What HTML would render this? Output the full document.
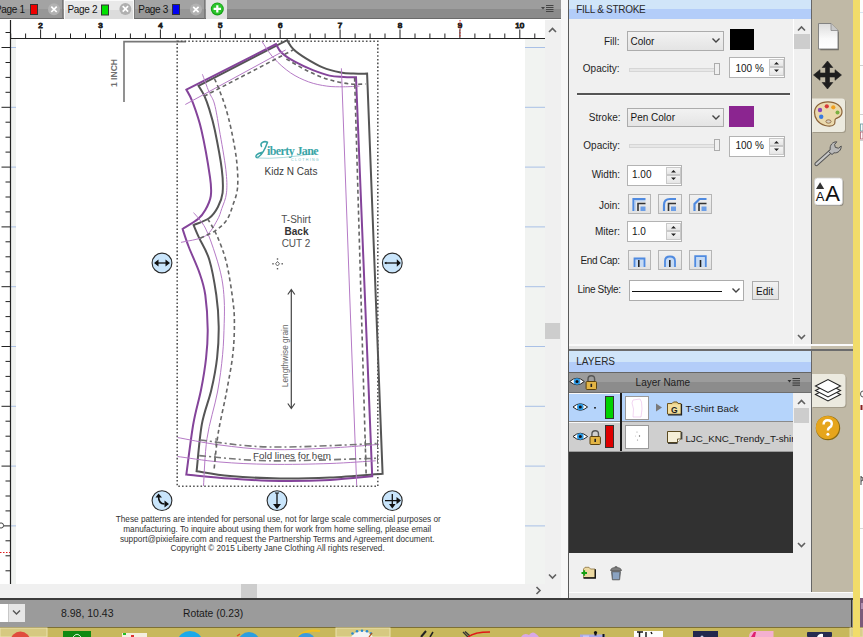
<!DOCTYPE html>
<html><head><meta charset="utf-8">
<style>
*{box-sizing:border-box}
html,body{margin:0;padding:0}
body{width:863px;height:637px;overflow:hidden;position:relative;background:#fff;font-family:"Liberation Sans",sans-serif;color:#222}
.a{position:absolute}
svg text{font-family:"Liberation Sans",sans-serif}
.rn{font-size:8px;fill:#3a3a3a;text-anchor:middle}
.lb{font-size:10px;fill:#1e1e1e;text-anchor:end}
.tx{font-size:10px;fill:#151515}
</style></head><body>

<!-- canvas svg -->
<svg class="a" style="left:0;top:0" width="863" height="637" viewBox="0 0 863 637">
 <rect x="0" y="19" width="545" height="565" fill="#fff"/>
 <rect x="11" y="39" width="5" height="545" fill="#f1f3f1"/>
 <rect x="525" y="39" width="20" height="545" fill="#f1f3f1"/>
 <g stroke="#a9c0e6" stroke-width="1"><line x1="11" y1="47.5" x2="16" y2="47.5" /><line x1="525" y1="47.5" x2="545" y2="47.5" />
<line x1="11" y1="107.3" x2="16" y2="107.3" /><line x1="525" y1="107.3" x2="545" y2="107.3" />
<line x1="11" y1="167.1" x2="16" y2="167.1" /><line x1="525" y1="167.1" x2="545" y2="167.1" />
<line x1="11" y1="226.9" x2="16" y2="226.9" /><line x1="525" y1="226.9" x2="545" y2="226.9" />
<line x1="11" y1="286.7" x2="16" y2="286.7" /><line x1="525" y1="286.7" x2="545" y2="286.7" />
<line x1="11" y1="346.5" x2="16" y2="346.5" /><line x1="525" y1="346.5" x2="545" y2="346.5" />
<line x1="11" y1="406.3" x2="16" y2="406.3" /><line x1="525" y1="406.3" x2="545" y2="406.3" />
<line x1="11" y1="466.1" x2="16" y2="466.1" /><line x1="525" y1="466.1" x2="545" y2="466.1" />
<line x1="11" y1="525.9" x2="16" y2="525.9" /><line x1="525" y1="525.9" x2="545" y2="525.9" /></g>
 <g stroke="#222" stroke-width="1"><line x1="10.7" y1="33.5" x2="10.7" y2="38" />
<line x1="25.6" y1="33.5" x2="25.6" y2="38" />
<line x1="40.6" y1="29.5" x2="40.6" y2="38" />
<text x="40.6" y="28" class="rn">2</text>
<line x1="55.6" y1="33.5" x2="55.6" y2="38" />
<line x1="70.5" y1="33.5" x2="70.5" y2="38" />
<line x1="85.5" y1="33.5" x2="85.5" y2="38" />
<line x1="100.5" y1="29.5" x2="100.5" y2="38" />
<text x="100.5" y="28" class="rn">3</text>
<line x1="115.5" y1="33.5" x2="115.5" y2="38" />
<line x1="130.4" y1="33.5" x2="130.4" y2="38" />
<line x1="145.4" y1="33.5" x2="145.4" y2="38" />
<line x1="160.4" y1="29.5" x2="160.4" y2="38" />
<text x="160.4" y="28" class="rn">4</text>
<line x1="175.4" y1="33.5" x2="175.4" y2="38" />
<line x1="190.3" y1="33.5" x2="190.3" y2="38" />
<line x1="205.3" y1="33.5" x2="205.3" y2="38" />
<line x1="220.3" y1="29.5" x2="220.3" y2="38" />
<text x="220.3" y="28" class="rn">5</text>
<line x1="235.3" y1="33.5" x2="235.3" y2="38" />
<line x1="250.2" y1="33.5" x2="250.2" y2="38" />
<line x1="265.2" y1="33.5" x2="265.2" y2="38" />
<line x1="280.2" y1="29.5" x2="280.2" y2="38" />
<text x="280.2" y="28" class="rn">6</text>
<line x1="295.2" y1="33.5" x2="295.2" y2="38" />
<line x1="310.2" y1="33.5" x2="310.2" y2="38" />
<line x1="325.1" y1="33.5" x2="325.1" y2="38" />
<line x1="340.1" y1="29.5" x2="340.1" y2="38" />
<text x="340.1" y="28" class="rn">7</text>
<line x1="355.1" y1="33.5" x2="355.1" y2="38" />
<line x1="370.1" y1="33.5" x2="370.1" y2="38" />
<line x1="385.0" y1="33.5" x2="385.0" y2="38" />
<line x1="400.0" y1="29.5" x2="400.0" y2="38" />
<text x="400.0" y="28" class="rn">8</text>
<line x1="415.0" y1="33.5" x2="415.0" y2="38" />
<line x1="429.9" y1="33.5" x2="429.9" y2="38" />
<line x1="444.9" y1="33.5" x2="444.9" y2="38" />
<line x1="459.9" y1="29.5" x2="459.9" y2="38" />
<text x="459.9" y="28" class="rn">9</text>
<line x1="474.9" y1="33.5" x2="474.9" y2="38" />
<line x1="489.9" y1="33.5" x2="489.9" y2="38" />
<line x1="504.8" y1="33.5" x2="504.8" y2="38" />
<line x1="519.8" y1="29.5" x2="519.8" y2="38" />
<text x="519.8" y="28" class="rn">10</text>
<line x1="534.8" y1="33.5" x2="534.8" y2="38" />
<line x1="5.5" y1="32.5" x2="10" y2="32.5" />
<line x1="1.5" y1="47.5" x2="10" y2="47.5" />
<line x1="5.5" y1="62.5" x2="10" y2="62.5" />
<line x1="5.5" y1="77.4" x2="10" y2="77.4" />
<line x1="5.5" y1="92.3" x2="10" y2="92.3" />
<line x1="1.5" y1="107.3" x2="10" y2="107.3" />
<line x1="5.5" y1="122.2" x2="10" y2="122.2" />
<line x1="5.5" y1="137.2" x2="10" y2="137.2" />
<line x1="5.5" y1="152.1" x2="10" y2="152.1" />
<line x1="1.5" y1="167.1" x2="10" y2="167.1" />
<line x1="5.5" y1="182.0" x2="10" y2="182.0" />
<line x1="5.5" y1="197.0" x2="10" y2="197.0" />
<line x1="5.5" y1="211.9" x2="10" y2="211.9" />
<line x1="1.5" y1="226.9" x2="10" y2="226.9" />
<line x1="5.5" y1="241.8" x2="10" y2="241.8" />
<line x1="5.5" y1="256.8" x2="10" y2="256.8" />
<line x1="5.5" y1="271.8" x2="10" y2="271.8" />
<line x1="1.5" y1="286.7" x2="10" y2="286.7" />
<line x1="5.5" y1="301.6" x2="10" y2="301.6" />
<line x1="5.5" y1="316.6" x2="10" y2="316.6" />
<line x1="5.5" y1="331.6" x2="10" y2="331.6" />
<line x1="1.5" y1="346.5" x2="10" y2="346.5" />
<line x1="5.5" y1="361.4" x2="10" y2="361.4" />
<line x1="5.5" y1="376.4" x2="10" y2="376.4" />
<line x1="5.5" y1="391.3" x2="10" y2="391.3" />
<line x1="1.5" y1="406.3" x2="10" y2="406.3" />
<line x1="5.5" y1="421.2" x2="10" y2="421.2" />
<line x1="5.5" y1="436.2" x2="10" y2="436.2" />
<line x1="5.5" y1="451.1" x2="10" y2="451.1" />
<line x1="1.5" y1="466.1" x2="10" y2="466.1" />
<line x1="5.5" y1="481.0" x2="10" y2="481.0" />
<line x1="5.5" y1="496.0" x2="10" y2="496.0" />
<line x1="5.5" y1="510.9" x2="10" y2="510.9" />
<line x1="1.5" y1="525.9" x2="10" y2="525.9" />
<line x1="5.5" y1="540.8" x2="10" y2="540.8" />
<line x1="5.5" y1="555.8" x2="10" y2="555.8" />
<line x1="5.5" y1="570.8" x2="10" y2="570.8" /></g>
 <line x1="10" y1="38.5" x2="545" y2="38.5" stroke="#222" stroke-width="1.2"/>
 <line x1="10.5" y1="20" x2="10.5" y2="584" stroke="#222" stroke-width="1.2"/>
 <line x1="460" y1="20" x2="460" y2="38" stroke="#e02020" stroke-width="1" stroke-dasharray="1.5 1.5"/>
 <line x1="0" y1="552.5" x2="10" y2="552.5" stroke="#e02020" stroke-width="1" stroke-dasharray="1.5 1.5"/>
 <circle cx="1" cy="525.5" r="2.6" fill="#fff" stroke="#444" stroke-width="1"/>
 <path d="M124,102 V41.6 H186" fill="none" stroke="#777" stroke-width="1.6"/>
 <text transform="translate(117,73) rotate(-90)" text-anchor="middle" font-size="8.6" font-weight="bold" fill="#707070">1 INCH</text>
 <rect x="177.2" y="41.2" width="200.6" height="445.1" fill="none" stroke="#555" stroke-width="1.6" stroke-dasharray="1.6 2.1"/>
 <path d="M198.5,85.8 L287.1,40.2 C288.2,41.7 290.3,46.2 293.4,49.2 C296.5,52.2 301.0,55.3 305.9,58.3 C310.8,61.3 316.8,64.9 322.6,67.3 C328.4,69.7 335.6,71.4 340.7,72.4 C345.8,73.5 348.8,73.4 353.2,73.6 C357.6,73.8 364.8,73.6 367.1,73.6 L382.6,473.7 C373.8,474.3 347.1,476.7 330,477.5 C312.9,478.3 296.7,478.8 280,478.5 C263.3,478.2 243.9,477.2 230,476 C216.1,474.8 202.2,472.0 196.6,471.2 C197.5,463.4 199.4,438.0 201.8,424.5 C204.2,411.0 208.8,401.1 211.3,390 C213.9,378.9 215.9,368.4 217.1,357.8 C218.3,347.2 218.8,336.9 218.7,326.4 C218.6,315.9 217.9,306.1 216.3,295 C214.7,283.9 212.2,269.2 209.3,259.7 C206.4,250.1 201.6,243.5 199,237.7 C196.4,231.9 194.5,227.2 193.6,225.1 C196.2,223.9 205.2,221.0 209.3,218 C213.4,215.0 215.7,211.2 217.9,207 C220.1,202.8 221.9,199.1 222.6,192.8 C223.2,186.5 223.1,179.8 221.8,169.3 C220.5,158.8 216.9,140.2 214.8,130 C212.7,119.8 210.7,114.0 209,108.4 C207.3,102.8 206.3,100.1 204.6,96.3 C202.8,92.5 199.5,87.5 198.5,85.8 Z" fill="none" stroke="#555" stroke-width="2" stroke-linejoin="miter"/>
<path d="M186.4,89.7 L276,44.1 C276.9,45.5 278.5,49.8 281.6,52.7 C284.7,55.6 289.6,58.8 294.8,61.7 C300.0,64.6 307.1,67.8 312.9,70.1 C318.7,72.4 324.4,74.4 329.5,75.6 C334.6,76.8 339.0,76.7 343.4,77 C347.8,77.3 353.9,77.2 356,77.3 L372.2,476.3 C365.2,476.9 345.4,479.2 330,480 C314.6,480.8 296.7,481.2 280,481 C263.3,480.8 245.6,479.6 230,478.5 C214.4,477.4 193.6,475.2 186.3,474.6 C187.5,466.2 190.8,438.6 193.2,424.5 C195.6,410.4 198.8,401.1 201,390 C203.2,378.9 205.0,367.9 206.1,357.8 C207.2,347.7 207.8,340.0 207.7,329.5 C207.6,319.0 206.6,304.3 205.3,295 C204.0,285.7 202.6,281.8 199.8,273.8 C197.1,265.8 191.7,254.5 188.8,247 C185.9,239.5 183.6,232.0 182.6,229 C185.2,227.3 194.5,222.0 198.3,218.8 C202.1,215.7 203.2,213.9 205.3,210.1 C207.4,206.3 210.0,201.5 210.8,196 C211.6,190.5 211.6,188.1 210,177.1 C208.4,166.1 204.3,142.6 201.4,130 C198.5,117.5 195.0,108.5 192.5,101.8 C190.0,95.1 187.4,91.7 186.4,89.7 Z" fill="none" stroke="#84449a" stroke-width="2" stroke-linejoin="miter"/>
<path d="M202.4,74.3 C203.5,77.2 207.0,87.0 209,91.9 C211.0,96.9 212.8,97.7 214.5,104 C216.2,110.3 217.5,119.1 219.4,130 C221.3,140.9 224.6,158.8 225.8,169.3 C227.0,179.8 227.2,186.3 226.5,192.8 C225.8,199.3 223.4,203.9 221.8,208.5 C220.2,213.1 219.8,215.8 217.1,220.4 C214.3,225.0 211.3,232.3 205.3,236 C199.3,239.7 185.1,241.3 181,242.4" fill="none" stroke="#b57ac6" stroke-width="1"/>
<path d="M193.6,212.6 C195.6,215.2 201.7,220.9 205.3,228 C209.0,235.1 212.8,246.6 215.5,255 C218.2,263.4 220.4,271.0 221.8,278.5 C223.2,286.0 223.8,292.5 224.2,300 C224.6,307.5 224.5,314.2 224.2,323.3 C223.9,332.4 223.7,343.2 222.6,354.7 C221.5,366.1 220.1,378.1 217.5,392 C214.9,405.9 209.3,422.8 207,438.4 C204.7,454.0 204.1,478.0 203.5,485.9" fill="none" stroke="#b57ac6" stroke-width="1"/>
<path d="M185.3,104.5 L285.7,49.9" fill="none" stroke="#b57ac6" stroke-width="1"/>
<path d="M262,41.6 C264.0,44.4 269.1,53.1 273.9,58.3 C278.7,63.5 284.8,69.0 290.6,72.9 C296.4,76.8 302.7,79.7 308.7,81.9 C314.7,84.1 321.0,85.3 326.8,86.1 C332.6,86.9 338.0,86.8 343.4,86.8 C348.8,86.8 356.7,86.2 359.4,86.1" fill="none" stroke="#b57ac6" stroke-width="1"/>
<path d="M341.4,68.3 L356.7,485.8" fill="none" stroke="#b57ac6" stroke-width="1"/>
<path d="M177.6,437.5 C184.7,438.8 204.6,443.0 220,445 C235.4,447.0 251.7,449.1 270,449.6 C288.3,450.1 311.8,448.9 330,448 C348.2,447.1 370.8,445.0 379,444.4" fill="none" stroke="#b57ac6" stroke-width="1"/>
<path d="M177.6,456.5 C184.7,457.4 204.6,460.7 220,462 C235.4,463.3 251.7,464.1 270,464.3 C288.3,464.6 312.4,464.1 330,463.5 C347.6,462.9 368.1,461.2 375.7,460.8" fill="none" stroke="#b57ac6" stroke-width="1"/>
<path d="M204,96.3 L293,50" fill="none" stroke="#666" stroke-width="1.6" stroke-dasharray="4 3"/>
<path d="M214.5,78.7 C215.3,80.6 217.6,85.4 219.4,90.2 C221.2,95.0 223.5,100.7 225.5,107.3 C227.5,113.9 229.4,121.0 231.3,130 C233.2,139.0 235.7,151.7 236.7,161.4 C237.7,171.1 238.2,180.7 237.5,188 C236.8,195.3 234.6,200.0 232.8,205.4 C231.0,210.8 229.4,216.2 226.5,220.4 C223.6,224.6 219.9,227.6 215.5,230.6 C211.1,233.6 202.4,237.2 199.8,238.5" fill="none" stroke="#666" stroke-width="1.6" stroke-dasharray="4 3"/>
<path d="M207.7,218.8 C209.3,221.7 214.0,228.7 217.1,236 C220.2,243.3 223.9,252.1 226.5,262.8 C229.1,273.5 231.5,289.9 232.8,300 C234.1,310.1 234.4,314.2 234.4,323.3 C234.4,332.4 234.1,343.2 232.8,354.7 C231.5,366.1 228.9,378.9 226.5,392 C224.1,405.1 220.3,420.0 218.2,433.2 C216.1,446.4 214.6,464.9 213.9,471.2" fill="none" stroke="#666" stroke-width="1.6" stroke-dasharray="4 3"/>
<path d="M286.4,59 C290.1,61.1 301.5,68.0 308.7,71.5 C315.9,75.0 322.6,77.7 329.5,79.8 C336.4,81.9 344.4,83.3 350.4,84 C356.4,84.7 363.1,84.0 365.7,84" fill="none" stroke="#666" stroke-width="1.6" stroke-dasharray="4 3"/>
<path d="M354.6,77.7 L366.2,476.3" fill="none" stroke="#666" stroke-width="1.6" stroke-dasharray="4 3"/>
<path d="M200,440 C211.7,441.2 240.2,446.4 270,447 C299.8,447.6 360.8,444.1 379,443.5" fill="none" stroke="#777" stroke-width="1.6" stroke-dasharray="7 3 2 3"/>
<path d="M199.2,455.6 C211.0,456.5 240.0,460.4 270,460.8 C300.0,461.2 360.9,458.6 379.1,458.2" fill="none" stroke="#777" stroke-width="1.6" stroke-dasharray="7 3 2 3"/>
 <!-- texts -->
<text x="291" y="175.4" font-size="10" fill="#3c3c3c" text-anchor="middle">Kidz N Cats</text>
<text x="296" y="222.6" font-size="10" fill="#505050" text-anchor="middle">T-Shirt</text>
<text x="296.5" y="234.7" font-size="10" font-weight="bold" fill="#333" text-anchor="middle">Back</text>
<text x="296" y="246.8" font-size="10" fill="#505050" text-anchor="middle">CUT 2</text>
<text x="292" y="459" font-size="9.8" fill="#444" text-anchor="middle">Fold lines for hem</text>
<text transform="translate(288,355.8) rotate(-90)" font-size="8.3" fill="#666" text-anchor="middle">Lengthwise grain</text>
<g font-size="8.25" fill="#333" text-anchor="middle">
<text x="278.3" y="521.7">These patterns are intended for personal use, not for large scale commercial purposes or</text>
<text x="277.2" y="531.7">manufacturing. To inquire about using them for work from home selling, please email</text>
<text x="277.2" y="541.5">support@pixiefaire.com and request the Partnership Terms and Agreement document.</text>
<text x="277.6" y="551.3">Copyright © 2015 Liberty Jane Clothing All rights reserved.</text>
</g>
<!-- grain arrow -->
<path d="M291.3,289.5 V408.5 M287.8,294.5 L291.3,289.5 L294.8,294.5 M287.8,403.5 L291.3,408.5 L294.8,403.5" fill="none" stroke="#444" stroke-width="1.2"/>
<!-- crosshair -->
<g fill="#555">
<rect x="276.8" y="258.3" width="1.4" height="1.4"/><rect x="276.8" y="268" width="1.4" height="1.4"/>
<rect x="272.3" y="263.1" width="1.4" height="1.4"/><rect x="281.5" y="263.1" width="1.4" height="1.4"/>
</g>
<path d="M277.5,261.5 L279.5,263.8 L277.5,266 L275.5,263.8 Z" fill="none" stroke="#555" stroke-width="0.9"/>
<!-- logo -->
<path d="M267.5,142.3 C264,140.5 259.5,143 261.5,146.5 M267.5,142.3 C265.5,148 263,154 258.5,157 C256.5,158.2 255,157 256.5,155 C258,153 261,152.5 263,152" fill="none" stroke="#3aa5a7" stroke-width="1.5" stroke-linecap="round"/>
<path d="M257,158 Q280,159.5 317,153" fill="none" stroke="#86c9cb" stroke-width="0.7"/>
<text x="267" y="154.5" style="font-family:'Liberation Serif'" font-size="12" font-weight="bold" fill="#3aa5a7" letter-spacing="-0.6">iberty Jane</text>
<text x="291" y="160.6" font-size="3.6" fill="#6dbdbf" letter-spacing="1.3">CLOTHING</text>
<!-- handles -->

<circle cx="162" cy="263" r="9.9" fill="#c9e5fb" stroke="#2a2a2a" stroke-width="1.1"/>
<path d="M157.5,263 H166.5" stroke="#111" stroke-width="1.3"/>
<path d="M154,263 L158.5,259.5 V266.5 Z M170,263 L165.5,259.5 V266.5 Z" fill="#111"/>
<circle cx="392.3" cy="263" r="9.9" fill="#c9e5fb" stroke="#2a2a2a" stroke-width="1.1"/>
<path d="M385,263 H397" stroke="#111" stroke-width="1.3"/>
<path d="M384,263 L386.5,261.8 V264.2 Z M400.8,263 L396.8,259.3 V266.7 Z" fill="#111"/>
<circle cx="162" cy="500.6" r="9.9" fill="#c9e5fb" stroke="#2a2a2a" stroke-width="1.1"/>
<path d="M158.5,496 Q158.5,504 164.5,504" fill="none" stroke="#111" stroke-width="1.6"/>
<path d="M155.5,497.5 L158.5,493.5 L162,497.5 Z M164.5,500.5 L169,504 L164.5,507.5 Z" fill="#111"/>
<circle cx="277" cy="500.6" r="9.9" fill="#c9e5fb" stroke="#2a2a2a" stroke-width="1.1"/>
<path d="M277,493 V505" stroke="#111" stroke-width="1.3"/>
<path d="M273,504 L277,509 L281,504 Z" fill="#111"/>
<path d="M275,493 H279" stroke="#111" stroke-width="1"/>
<circle cx="392.3" cy="500.6" r="9.9" fill="#c9e5fb" stroke="#2a2a2a" stroke-width="1.1"/>
<path d="M392.3,494 V505 M385,500.6 H397" stroke="#111" stroke-width="1.3"/>
<path d="M389,504 L392.3,508.5 L395.6,504 Z M396.5,497 L401,500.6 L396.5,504.2 Z" fill="#111"/>

</svg>

<!-- tab bar -->
<div class="a" style="left:0;top:0;width:561px;height:19px;background:linear-gradient(#9d9d9d 0,#9d9d9d 9px,#8b8b8b 9px);border-bottom:1px solid #6a6a6a"></div>
<div class="a" style="left:-2px;top:0;width:65px;height:19px;background:linear-gradient(#a3a3a3 0,#a3a3a3 9px,#979797 9px);border-right:1px solid #7a7a7a;border-bottom:1px solid #6a6a6a"></div>
<div class="a" style="left:64px;top:0;width:70px;height:19px;background:linear-gradient(#e9e9e9 0,#e9e9e9 9px,#dcdcdc 9px);border:1px solid #fafafa;border-bottom:none"></div>
<div class="a" style="left:134px;top:0;width:71px;height:19px;background:linear-gradient(#a3a3a3 0,#a3a3a3 9px,#979797 9px);border-left:1px solid #7a7a7a;border-right:1px solid #7a7a7a;border-bottom:1px solid #6a6a6a"></div>
<div class="a" style="left:206px;top:0;width:21px;height:19px;background:#e2e2e2"></div>

<!-- strip between canvas and panel -->
<div class="a" style="left:561px;top:0;width:7px;height:598px;background:#f7f7f7"></div>
<div class="a" style="left:568px;top:0;width:1px;height:598px;background:#5a5a5a"></div>

<!-- scrollbars -->
<div class="a" style="left:545px;top:20px;width:16px;height:578px;background:#f0f0f0"></div>
<div class="a" style="left:545px;top:323px;width:15px;height:16px;background:#cdcdcd"></div>
<div class="a" style="left:0;top:584px;width:545px;height:14px;background:#f0f0f0"></div>
<div class="a" style="left:241px;top:584px;width:16px;height:14px;background:#cdcdcd"></div>

<!-- status bar -->
<div class="a" style="left:0;top:598px;width:853px;height:2px;background:#3c3c3c"></div>
<div class="a" style="left:0;top:600px;width:853px;height:27px;background:#9b9b9b"></div>
<div class="a" style="left:0;top:604px;width:8px;height:18px;background:#fff"></div>
<div class="a" style="left:8px;top:604px;width:17px;height:18px;background:#e6e6e6;border-left:1px solid #c8c8c8"></div>
<!-- taskbar -->
<svg class="a" style="left:0;top:627px" width="863" height="10" viewBox="0 627 863 10">
 <rect x="0" y="627" width="863" height="10" fill="#c8b85c"/>
 <rect x="0" y="627" width="863" height="1" fill="#7d7035"/>
 <rect x="0" y="628" width="47" height="9" fill="#d6c981" stroke="#ece2b0" stroke-width="1"/>
 <rect x="336" y="628" width="54" height="9" fill="#d6c981" stroke="#ece2b0" stroke-width="1"/>
 <rect x="850" y="628" width="13" height="9" fill="#d9ce8c" stroke="#ece2b0" stroke-width="0.8"/>
 <circle cx="20.4" cy="641.5" r="10" fill="#e04c3c"/>
 <rect x="63" y="631" width="28" height="8" fill="#0f8a12"/>
 <path d="M73,637 Q77,631.5 81,637" fill="none" stroke="#d0f0d0" stroke-width="1"/>
 <rect x="122" y="633" width="25" height="6" fill="#f4eee0"/>
 <rect x="123" y="633" width="3" height="2" fill="#20c020"/><rect x="131" y="635" width="3" height="2" fill="#e03030"/>
 <ellipse cx="190" cy="641" rx="12" ry="10" fill="#1aa9ea"/>
 <ellipse cx="249" cy="642" rx="10.5" ry="10" fill="#2a9ee0"/>
 <path d="M237,636 L240,634" stroke="#e05020" stroke-width="1.5"/>
 <path d="M296,640 Q302,628.5 320,631" fill="none" stroke="#f0c020" stroke-width="2.2"/>
 <ellipse cx="306" cy="641" rx="9" ry="8" fill="#3a9ae0"/>
 <ellipse cx="362" cy="642" rx="12" ry="11" fill="#f4f4f4"/>
 <g fill="#2a8ad0"><circle cx="352.5" cy="633.5" r="1.3"/><circle cx="357" cy="631.3" r="1.3"/><circle cx="362" cy="630.8" r="1.3"/><circle cx="367" cy="631.3" r="1.3"/><circle cx="371" cy="633.5" r="1.3"/></g>
 <path d="M369,637 L372,633" stroke="#c05010" stroke-width="1.2"/>
 <path d="M421,637 L426,631" stroke="#222" stroke-width="2"/>
 <path d="M430,637 L433,632" stroke="#222" stroke-width="1.5"/>
 <path d="M463,632 L468,637 M465,631.5 L470,636" stroke="#333" stroke-width="1.4"/>
 <path d="M468,637 Q474,632 490,632" fill="none" stroke="#e01818" stroke-width="1.5"/>
 <path d="M521,637 Q524,632 529,635 Q533,629 539,637 Z" fill="#d8a8e8"/>
 <rect x="580" y="634.5" width="25" height="3" fill="#a8a8e8"/>
 <rect x="583" y="635.5" width="6" height="2" fill="#c8c8f8"/>
 <circle cx="595.5" cy="632.5" r="1.6" fill="#111"/><rect x="594.5" y="632.5" width="2" height="3" fill="#111"/>
 <rect x="602.5" y="634" width="2" height="3" fill="#111"/>
 <rect x="634" y="631" width="29" height="6" fill="#fcfcfc"/>
 <path d="M637,632 H643 M639.5,632 V637 M646,632 V637 M651,632 L652,634" stroke="#111" stroke-width="1.4"/>
 <rect x="693" y="631" width="25" height="6" fill="#22284e"/>
 <circle cx="702" cy="637" r="1.5" fill="#c8d0e8"/>
 <path d="M749,637 Q749,631.5 754,631 H773.5 V637 Z" fill="#f4b0d0"/>
 <path d="M751,637 L754,632 H756 L755,637 Z" fill="#e02070"/>
 <rect x="807" y="632" width="25" height="5" rx="1" fill="#262c50"/>
 <path d="M817,637 Q819,633 823,634 V637 Z" fill="#fff"/>
</svg>


<!-- right panel -->
<div class="a" style="left:569px;top:0;width:242px;height:598px;background:#f0f0f0"></div>
<div class="a" style="left:569px;top:0;width:242px;height:19px;background:linear-gradient(#d0e5f9 0,#d0e5f9 9px,#b3cdf9 9px)"></div>
<!-- fill & stroke controls -->
<div class="a" style="left:627px;top:31px;width:97px;height:20px;border:1px solid #acacac;background:linear-gradient(#f2f2f2,#e4e4e4)"></div>
<div class="a" style="left:730px;top:29px;width:24px;height:21px;background:#000"></div>
<div class="a" style="left:629px;top:68px;width:91px;height:4px;border:1px solid #d6d6d6;background:#e7e7e7"></div>
<div class="a" style="left:714px;top:63px;width:6px;height:12px;border:1px solid #acacac;background:#f0f0f0"></div>
<div class="a" style="left:729px;top:57px;width:56px;height:21px;border:1px solid #b3b3b3;background:#fff"></div>
<div class="a" style="left:769px;top:59px;width:15px;height:8px;border:1px solid #c9c9c9;background:linear-gradient(#f5f5f5,#e5e5e5)"></div>
<div class="a" style="left:769px;top:67px;width:15px;height:9px;border:1px solid #c9c9c9;background:linear-gradient(#f5f5f5,#e5e5e5)"></div>
<div class="a" style="left:577px;top:93px;width:213px;height:2px;background:#555"></div>
<div class="a" style="left:577px;top:95px;width:213px;height:1px;background:#fafafa"></div>

<div class="a" style="left:627px;top:108px;width:97px;height:19px;border:1px solid #acacac;background:linear-gradient(#f2f2f2,#e4e4e4)"></div>
<div class="a" style="left:729px;top:106px;width:25px;height:21px;background:#8b2590"></div>
<div class="a" style="left:629px;top:144px;width:91px;height:4px;border:1px solid #d6d6d6;background:#e7e7e7"></div>
<div class="a" style="left:714px;top:139px;width:6px;height:12px;border:1px solid #acacac;background:#f0f0f0"></div>
<div class="a" style="left:729px;top:136px;width:56px;height:21px;border:1px solid #b3b3b3;background:#fff"></div>
<div class="a" style="left:769px;top:138px;width:15px;height:8px;border:1px solid #c9c9c9;background:linear-gradient(#f5f5f5,#e5e5e5)"></div>
<div class="a" style="left:769px;top:146px;width:15px;height:9px;border:1px solid #c9c9c9;background:linear-gradient(#f5f5f5,#e5e5e5)"></div>

<div class="a" style="left:627px;top:165px;width:55px;height:21px;border:1px solid #b3b3b3;background:#fff"></div>
<div class="a" style="left:666px;top:167px;width:15px;height:8px;border:1px solid #c9c9c9;background:linear-gradient(#f5f5f5,#e5e5e5)"></div>
<div class="a" style="left:666px;top:175px;width:15px;height:9px;border:1px solid #c9c9c9;background:linear-gradient(#f5f5f5,#e5e5e5)"></div>

<div class="a" style="left:628px;top:194px;width:23px;height:20px;border:1px solid #b5b5b5;background:linear-gradient(#f1f1f1,#e2e2e2)"></div>
<div class="a" style="left:658px;top:194px;width:24px;height:20px;border:1px solid #b5b5b5;background:linear-gradient(#f1f1f1,#e2e2e2)"></div>
<div class="a" style="left:689px;top:194px;width:23px;height:20px;border:1px solid #b5b5b5;background:linear-gradient(#f1f1f1,#e2e2e2)"></div>

<div class="a" style="left:627px;top:221px;width:55px;height:21px;border:1px solid #b3b3b3;background:#fff"></div>
<div class="a" style="left:666px;top:223px;width:15px;height:8px;border:1px solid #c9c9c9;background:linear-gradient(#f5f5f5,#e5e5e5)"></div>
<div class="a" style="left:666px;top:231px;width:15px;height:9px;border:1px solid #c9c9c9;background:linear-gradient(#f5f5f5,#e5e5e5)"></div>

<div class="a" style="left:628px;top:250px;width:23px;height:20px;border:1px solid #b5b5b5;background:linear-gradient(#f1f1f1,#e2e2e2)"></div>
<div class="a" style="left:658px;top:250px;width:24px;height:20px;border:1px solid #b5b5b5;background:linear-gradient(#f1f1f1,#e2e2e2)"></div>
<div class="a" style="left:689px;top:250px;width:23px;height:20px;border:1px solid #b5b5b5;background:linear-gradient(#f1f1f1,#e2e2e2)"></div>

<div class="a" style="left:629px;top:280px;width:115px;height:21px;border:1px solid #acacac;background:#fff"></div>
<div class="a" style="left:752px;top:281px;width:27px;height:19px;border:1px solid #acacac;background:linear-gradient(#f2f2f2,#e2e2e2)"></div>

<!-- panel scrollbar -->
<div class="a" style="left:793px;top:19px;width:1px;height:325px;background:#fff"></div>
<div class="a" style="left:794px;top:34px;width:16px;height:15px;background:#cdcdcd"></div>


<!-- layers -->
<div class="a" style="left:569px;top:351px;width:242px;height:21px;background:linear-gradient(#d0e5f9 0,#d0e5f9 11px,#b3cdf9 11px)"></div>
<div class="a" style="left:569px;top:372px;width:242px;height:21px;background:linear-gradient(#666 0,#666 1px,#9c9c9c 1px,#9c9c9c 10px,#8c8c8c 10px,#8c8c8c 20px,#6e6e6e 20px)"></div>
<div class="a" style="left:569px;top:393px;width:224px;height:29px;background:#b5d4fb"></div>
<div class="a" style="left:569px;top:421px;width:224px;height:1px;background:#8a8a8a"></div>
<div class="a" style="left:569px;top:422px;width:224px;height:29px;background:#cfcfcf"></div>
<div class="a" style="left:569px;top:422px;width:52px;height:1px;background:#f8f8f8"></div>
<div class="a" style="left:569px;top:393px;width:52px;height:1px;background:#f8f8f8"></div>
<div class="a" style="left:620px;top:393px;width:2px;height:58px;background:#1a1a1a"></div>
<div class="a" style="left:569px;top:451px;width:224px;height:1px;background:#9a9a9a"></div>
<div class="a" style="left:569px;top:452px;width:224px;height:101px;background:#313131"></div>
<div class="a" style="left:625px;top:396px;width:24px;height:24px;background:#fff;border:1px solid #9a9a9a"></div>
<div class="a" style="left:625px;top:425px;width:24px;height:24px;background:#fff;border:1px solid #9a9a9a"></div>
<div class="a" style="left:605px;top:396px;width:9px;height:23px;background:#00d200;border:1px solid #333"></div>
<div class="a" style="left:605px;top:425px;width:9px;height:23px;background:#dd0000;border:1px solid #333"></div>
<div class="a" style="left:794px;top:408px;width:15px;height:15px;background:#cdcdcd"></div>


<!-- tan tool strip -->
<div class="a" style="left:811px;top:0;width:1px;height:598px;background:#666"></div>
<div class="a" style="left:812px;top:0;width:41px;height:598px;background:#c0b9a6"></div>
<div class="a" style="left:853px;top:0;width:7px;height:637px;background:#f1dc6a"></div>
<div class="a" style="left:860px;top:0;width:3px;height:627px;background:#fdfdfd"></div>
<!-- splitter -->
<div class="a" style="left:569px;top:344px;width:284px;height:2px;background:#fafafa"></div>
<div class="a" style="left:569px;top:346px;width:242px;height:3px;background:#e4e4e4"></div><div class="a" style="left:811px;top:346px;width:42px;height:3px;background:#c6bfad"></div>
<div class="a" style="left:569px;top:349px;width:284px;height:2px;background:#6c6c6c"></div>
<div class="a" style="left:569px;top:592px;width:284px;height:1px;background:#fcfcfc"></div>
<div class="a" style="left:569px;top:593px;width:284px;height:5px;background:#e9e9e9"></div>


<!-- overlay text/icons -->
<svg class="a" style="left:0;top:0" width="863" height="637" viewBox="0 0 863 637">
<!-- tab texts -->
<text x="-5" y="12.5" class="tx" fill="#222" textLength="30" lengthAdjust="spacing">Page 1</text>
<rect x="30.5" y="4.5" width="7" height="10" fill="#ee0000" stroke="#333" stroke-width="1"/>
<circle cx="54" cy="9.3" r="6" fill="#b2b2b2"/>
<path d="M51.3,6.6 L56.7,12 M56.7,6.6 L51.3,12" stroke="#fff" stroke-width="1.7"/>
<text x="67.5" y="12.5" class="tx" fill="#222" textLength="30" lengthAdjust="spacing">Page 2</text>
<rect x="101.5" y="5" width="7" height="10" fill="#00e000" stroke="#333" stroke-width="1"/>
<circle cx="125.4" cy="8.9" r="6" fill="#b0b0b0"/>
<path d="M122.7,6.2 L128.1,11.6 M128.1,6.2 L122.7,11.6" stroke="#fff" stroke-width="1.7"/>
<text x="138.3" y="12.5" class="tx" fill="#222" textLength="30" lengthAdjust="spacing">Page 3</text>
<rect x="172.5" y="4.5" width="7" height="10" fill="#0000f0" stroke="#333" stroke-width="1"/>
<circle cx="195.9" cy="9.5" r="6" fill="#b2b2b2"/>
<path d="M193.2,6.8 L198.6,12.2 M198.6,6.8 L193.2,12.2" stroke="#fff" stroke-width="1.7"/>
<circle cx="217.3" cy="9" r="6.5" fill="#15a015"/>
<circle cx="217.3" cy="8.7" r="5.5" fill="#2dc52d"/>
<path d="M217.3,5.2 V12.6 M213.6,8.9 H221" stroke="#fff" stroke-width="2.2"/>
<!-- tab menu -->
<path d="M541,7 H545 L543,9.5 Z" fill="#444"/>
<path d="M546,5.5 H553.5 M546,7.5 H553.5 M546,9.5 H553.5 M546,11.5 H553.5" stroke="#444" stroke-width="1"/>
<!-- canvas scroll arrows -->
<path d="M549,32 L552.5,28.5 L556,32" fill="none" stroke="#606060" stroke-width="1.6"/>
<path d="M549,574.5 L552.5,578 L556,574.5" fill="none" stroke="#606060" stroke-width="1.6"/>
<path d="M536.5,587 L540,590.5 L536.5,594" fill="none" stroke="#606060" stroke-width="1.6"/>
<!-- status bar -->
<path d="M13,610.5 L16.5,614 L20,610.5" fill="none" stroke="#555" stroke-width="1.4"/>
<text x="61" y="616.7" font-size="10.5" fill="#1a1a1a">8.98, 10.43</text>
<text x="183" y="616.7" font-size="10.3" fill="#1a1a1a">Rotate (0.23)</text>

<text x="576.3" y="13" font-size="10" fill="#2a2a2a" letter-spacing="-0.3">FILL &amp; STROKE</text>
<text x="619.5" y="44.5" class="lb">Fill:</text>
<text x="630.5" y="44.5" class="tx">Color</text>
<path d="M712.5,38.5 L716,42 L719.5,38.5" fill="none" stroke="#444" stroke-width="1.4"/>
<text x="619.5" y="72" class="lb">Opacity:</text>
<text x="735.5" y="71.5" class="tx">100 %</text>
<path d="M774,64.5 L776.5,62 L779,64.5 Z M774,69.5 L776.5,72 L779,69.5 Z" fill="#222"/>
<text x="620.5" y="121" class="lb">Stroke:</text>
<text x="630.5" y="121" class="tx">Pen Color</text>
<path d="M712.5,115.5 L716,119 L719.5,115.5" fill="none" stroke="#444" stroke-width="1.4"/>
<text x="620" y="149" class="lb">Opacity:</text>
<text x="735.5" y="149.3" class="tx">100 %</text>
<path d="M774,143.5 L776.5,141 L779,143.5 Z M774,148.5 L776.5,151 L779,148.5 Z" fill="#222"/>
<text x="620" y="177.7" class="lb">Width:</text>
<text x="632" y="178.2" class="tx">1.00</text>
<path d="M671,172.5 L673.5,170 L676,172.5 Z M671,177.5 L673.5,180 L676,177.5 Z" fill="#222"/>
<text x="620" y="208.6" class="lb">Join:</text>
<text x="620" y="234.7" class="lb">Miter:</text>
<text x="632" y="234.6" class="tx">1.0</text>
<path d="M671,228.5 L673.5,226 L676,228.5 Z M671,233.5 L673.5,236 L676,233.5 Z" fill="#222"/>
<text x="620" y="264" class="lb" textLength="39.5" lengthAdjust="spacing">End Cap:</text>
<text x="621" y="293" class="lb" textLength="43.5" lengthAdjust="spacing">Line Style:</text>
<line x1="632" y1="291.5" x2="722" y2="291.5" stroke="#111" stroke-width="1"/>
<path d="M732.5,288.5 L736,292 L739.5,288.5" fill="none" stroke="#444" stroke-width="1.4"/>
<text x="756" y="294.5" class="tx">Edit</text>
<!-- join icons -->
<g transform="translate(628,194)">
 <path d="M5.5,17 V5 H17.5" fill="none" stroke="#4f8ae0" stroke-width="2.2"/>
 <path d="M7.2,17 V6.7 H17.5" fill="none" stroke="#b8d0f0" stroke-width="1.4"/>
 <path d="M10,17 V9.5 H17.5" fill="none" stroke="#333" stroke-width="1.6"/>
 <rect x="12.5" y="12.5" width="5" height="4.5" fill="#6c9ee6"/>
</g>
<g transform="translate(658.5,194)">
 <path d="M5.5,17 V11 Q5.5,5 11.5,5 H17.5" fill="none" stroke="#4f8ae0" stroke-width="2.2"/>
 <path d="M10,17 V9.5 H17.5" fill="none" stroke="#333" stroke-width="1.6"/>
 <rect x="12.5" y="12.5" width="5" height="4.5" fill="#6c9ee6"/>
</g>
<g transform="translate(689,194)">
 <path d="M5.5,17 V10 L10.5,5 H17.5" fill="none" stroke="#4f8ae0" stroke-width="2.2"/>
 <path d="M10,17 V9.5 H17.5" fill="none" stroke="#333" stroke-width="1.6"/>
 <rect x="12.5" y="12.5" width="5" height="4.5" fill="#6c9ee6"/>
</g>
<!-- cap icons -->
<g transform="translate(628,250)">
 <path d="M6.5,17 V8.5 H16.5 V17" fill="#c6dbf5" stroke="#4f8ae0" stroke-width="1.8"/>
 <line x1="10.8" y1="10" x2="10.8" y2="17" stroke="#222" stroke-width="1.6"/>
</g>
<g transform="translate(658.5,250)">
 <path d="M6.5,17 V11 Q6.5,6.5 11.5,6.5 Q16.5,6.5 16.5,11 V17" fill="#c6dbf5" stroke="#4f8ae0" stroke-width="1.8"/>
 <line x1="11.3" y1="10" x2="11.3" y2="17" stroke="#222" stroke-width="1.6"/>
</g>
<g transform="translate(689,250)">
 <path d="M6.2,17 V6.2 H16.8 V17" fill="#c6dbf5" stroke="#4f8ae0" stroke-width="1.8"/>
 <line x1="11.5" y1="10" x2="11.5" y2="17" stroke="#222" stroke-width="1.6"/>
</g>
<!-- panel scroll arrows -->
<path d="M798,30.5 L801.5,27 L805,30.5" fill="none" stroke="#606060" stroke-width="1.6"/>
<path d="M798,335 L801.5,338.5 L805,335" fill="none" stroke="#606060" stroke-width="1.6"/>

<text x="576.3" y="365.3" font-size="10" fill="#2a2a2a">LAYERS</text>

<g transform="translate(577,381.5)"><path d="M-7.3,0 Q0,-6.5 7.3,0 Q0,6.5 -7.3,0 Z" fill="#fff" stroke="#222" stroke-width="1"/><circle cx="0" cy="0" r="3.3" fill="#2b9be8"/><circle cx="0" cy="0" r="1.5" fill="#111"/></g>
<g transform="translate(591.3,383)"><path d="M-3.3,-1 V-3.8 Q-3.3,-7.3 0,-7.3 Q3.3,-7.3 3.3,-3.8 V-1" fill="none" stroke="#555" stroke-width="1.4"/><rect x="-5.2" y="-1.5" width="10.4" height="8" rx="1" fill="#e3b545" stroke="#5a4210" stroke-width="1"/><rect x="-0.8" y="0.8" width="1.6" height="3.2" fill="#222"/></g>
<text x="635.6" y="385.6" font-size="10" fill="#222">Layer Name</text>
<path d="M787.5,380 H791.5 L789.5,382.5 Z" fill="#333"/>
<path d="M792.5,378.5 H800 M792.5,380.8 H800 M792.5,383 H800 M792.5,385.2 H800" stroke="#333" stroke-width="1"/>
<g transform="translate(580.3,407)"><path d="M-7.3,0 Q0,-6.5 7.3,0 Q0,6.5 -7.3,0 Z" fill="#fff" stroke="#222" stroke-width="1"/><circle cx="0" cy="0" r="3.3" fill="#2b9be8"/><circle cx="0" cy="0" r="1.5" fill="#111"/></g>
<rect x="594.2" y="407" width="1.6" height="1.6" fill="#111"/>
<g transform="translate(580.3,436.5)"><path d="M-7.3,0 Q0,-6.5 7.3,0 Q0,6.5 -7.3,0 Z" fill="#fff" stroke="#222" stroke-width="1"/><circle cx="0" cy="0" r="3.3" fill="#2b9be8"/><circle cx="0" cy="0" r="1.5" fill="#111"/></g>
<g transform="translate(595.2,438)"><path d="M-3.3,-1 V-3.8 Q-3.3,-7.3 0,-7.3 Q3.3,-7.3 3.3,-3.8 V-1" fill="none" stroke="#555" stroke-width="1.4"/><rect x="-5.2" y="-1.5" width="10.4" height="8" rx="1" fill="#e3b545" stroke="#5a4210" stroke-width="1"/><rect x="-0.8" y="0.8" width="1.6" height="3.2" fill="#222"/></g>
<!-- thumbnail 1 shape -->
<path d="M633,400 L640,399 L641.5,402 L642,409 L641,417 L633,417 L633.5,409 L632,403 Z" fill="none" stroke="#ecc4ec" stroke-width="0.7"/>
<circle cx="637" cy="432" r="0.6" fill="#999"/><circle cx="639.5" cy="436" r="0.7" fill="#666"/><circle cx="637.5" cy="440" r="0.6" fill="#888"/><circle cx="635.5" cy="436" r="0.5" fill="#bbb"/>
<path d="M656,403.5 L662,407.5 L656,411.5 Z" fill="#7a7a7a"/>
<!-- folder G -->
<path d="M667.5,403.5 H672 L673.5,402 H677 L678,403.5 H681 V414 H667.5 Z" fill="#e8cf85" stroke="#6d5420" stroke-width="1"/>
<rect x="668" y="404.5" width="12.5" height="9" fill="#f3dfa0"/>
<path d="M681.5,404 V414.8 H668" fill="none" stroke="#222" stroke-width="1.2"/>
<text x="674.3" y="412.8" font-size="8.5" font-weight="bold" fill="#222" text-anchor="middle">G</text>
<text x="685.4" y="411.7" font-size="9.8" fill="#1a1a1a">T-Shirt Back</text>
<!-- doc icon -->
<path d="M667.5,431.5 H681 V439 L677.5,442.5 H667.5 Z" fill="#f5efd8" stroke="#5a4a20" stroke-width="1"/>
<path d="M677.5,442.5 V439 H681" fill="#fff" stroke="#5a4a20" stroke-width="0.9"/>
<path d="M681.8,432 V439.5 M668,443.3 H677.5" stroke="#222" stroke-width="1"/>
<svg x="569" y="422" width="224" height="29"><text x="116.4" y="19.5" font-size="9.8" fill="#1a1a1a">LJC_KNC_Trendy_T-shirt</text></svg>
<path d="M798,404 L801.5,400.5 L805,404" fill="none" stroke="#606060" stroke-width="1.6"/>
<path d="M798,543 L801.5,546.5 L805,543" fill="none" stroke="#606060" stroke-width="1.6"/>
<!-- bottom icons -->
<path d="M583.5,569 L585,567.3 H589 L590.5,569 H595 V577.5 H583.5 Z" fill="#ecd9a2" stroke="#8d7440" stroke-width="0.8"/>
<path d="M595.3,569.3 V578 H583.5" fill="none" stroke="#111" stroke-width="1.3"/>
<path d="M581.5,573 H587 M584.2,570.2 V575.8" stroke="#12a012" stroke-width="1.8"/>
<path d="M610.5,570.5 Q611,567.5 616,567.5 Q621,567.5 621.5,570.5 Z" fill="#7d7d7d" stroke="#555" stroke-width="0.8"/>
<rect x="614.8" y="566.2" width="2.4" height="1.6" fill="#666"/>
<path d="M611.5,571.5 H620.5 L619.6,579.8 H612.4 Z" fill="#6f7f92" stroke="#555" stroke-width="0.8"/>
<path d="M614,572.5 V579 M616,572.5 V579 M618,572.5 V579" stroke="#a8c8f0" stroke-width="1"/>

<!-- active tabs in tool strip -->
<path d="M812,98.5 H842 Q845,98.5 845,101.5 V129 Q845,132 842,132 H812 Z" fill="#a39c8a" transform="translate(1,1)"/>
<path d="M812,98.5 H842 Q845,98.5 845,101.5 V129 Q845,132 842,132 H812 Z" fill="#eceadf"/>
<path d="M812,374 H842 Q845.5,374 845.5,377.5 V403.5 Q845.5,407 842,407 H812 Z" fill="#a39c8a" transform="translate(1,1)"/>
<path d="M812,374 H842 Q845.5,374 845.5,377.5 V403.5 Q845.5,407 842,407 H812 Z" fill="#eceadf"/>
<!-- document -->
<defs><linearGradient id="dg" x1="0" y1="0" x2="0" y2="1"><stop offset="0" stop-color="#dcdcdc"/><stop offset="0.6" stop-color="#fafafa"/><stop offset="1" stop-color="#fff"/></linearGradient></defs>
<path d="M819.5,24.5 H831 L838,31.5 V49.5 H819.5 Z" fill="#6e6a60" transform="translate(0.8,0.8)"/>
<path d="M818.5,23.5 H831 L838,30.5 V49 H818.5 Z" fill="url(#dg)" stroke="#7a7a7a" stroke-width="0.9"/>
<path d="M831,23.5 V30.5 H838" fill="#c8c8c8" stroke="#888" stroke-width="0.8"/>
<!-- move cross -->
<path d="M827.5,61 L832.8,67.5 H829.5 V73 H835 V69.7 L841.5,75 L835,80.3 V77 H829.5 V82.5 H832.8 L827.5,89 L822.2,82.5 H825.5 V77 H820 V80.3 L813.5,75 L820,69.7 V73 H825.5 V67.5 H822.2 Z" fill="#1e1e1e" stroke="#1e1e1e" stroke-width="0.6" stroke-linejoin="round"/>
<!-- palette -->
<path d="M828,101.8 C836,101.8 842,106 842,112 C842,117 838.5,117.5 836,118.5 C834,119.5 835.5,122 834.5,124 C833,126.5 829,126.5 825,125.5 C818,123.8 814.5,118 814.5,112.5 C814.5,106 820,101.8 828,101.8 Z" fill="#ead9ad" stroke="#8a6238" stroke-width="1.2"/>
<ellipse cx="828.5" cy="121.5" rx="2.6" ry="1.7" fill="#d8d0c0" stroke="#8a6238" stroke-width="0.8"/>
<circle cx="826.8" cy="106.3" r="2.1" fill="#d83a3a"/>
<circle cx="833.3" cy="107.3" r="2.1" fill="#f0a020"/>
<circle cx="837.5" cy="112.5" r="2" fill="#7ab040"/>
<circle cx="820" cy="110" r="2.2" fill="#8a45b8"/>
<circle cx="821.2" cy="116.8" r="2.2" fill="#3a7ae0"/>
<!-- wrench -->
<path d="M816.5,164 L830.5,151.5" stroke="#555" stroke-width="4.2" stroke-linecap="round"/>
<path d="M816.5,164 L830.5,151.5" stroke="#c8c8c8" stroke-width="2.2" stroke-linecap="round"/>
<path d="M836.8,141.8 C832.5,141.5 829.5,145.5 830.2,149.5 L828.5,151.5 L832,154.5 L834,152.8 C838,153.5 841.5,150 841.2,146 L838.5,148.2 L835.3,147.4 L834.6,144.5 Z" fill="#b8b8b8" stroke="#505050" stroke-width="1"/>
<!-- AA -->
<rect x="815.5" y="179" width="28" height="27" rx="3" fill="#8a857a"/>
<rect x="814.5" y="178" width="28" height="27" rx="3" fill="#fff" stroke="#d0d0d0" stroke-width="0.8"/>
<path d="M816,189 L820.1,182.3 L824.2,189 Z" fill="#333"/>
<text x="820.2" y="201.4" font-size="13" fill="#111" text-anchor="middle">A</text>
<text x="832.5" y="201.4" font-size="22" fill="#111" text-anchor="middle">A</text>
<!-- layers stack -->
<g stroke="#222" stroke-width="1.1" fill="#fff">
 <path d="M815.5,394.5 L828,388 L840.5,394.5 L828,401 Z"/>
 <path d="M815.5,390.5 L828,384 L840.5,390.5 L828,397 Z"/>
 <path d="M815.5,386 L828,379.5 L840.5,386 L828,392.5 Z"/>
</g>
<!-- help -->
<circle cx="828" cy="428" r="12.2" fill="#8a6a10"/>
<circle cx="827.5" cy="427.5" r="11.6" fill="#e6a51c"/>
<path d="M823.6,424.5 Q823.6,420.2 827.7,420.2 Q831.8,420.2 831.8,424 Q831.8,426.3 829.4,427.6 Q827.9,428.5 827.9,430.5" fill="none" stroke="#fff" stroke-width="2.4"/>
<circle cx="827.9" cy="434.3" r="1.5" fill="#fff"/>

<!-- status bar right border -->
<rect x="851" y="598" width="1.2" height="29" fill="#333"/>
<!-- right edge fragments -->
<rect x="860" y="12" width="3" height="1" fill="#d8e4f0"/>
<rect x="860" y="65" width="3" height="1" fill="#d0d0d0"/>
<rect x="860" y="114" width="3" height="1" fill="#d0d0d0"/>
<rect x="860.5" y="124" width="2.5" height="7" fill="none" stroke="#6a9aa0" stroke-width="0.8"/>
<rect x="860.5" y="132" width="2.5" height="7" fill="none" stroke="#b06070" stroke-width="0.8"/>
<rect x="860" y="140" width="3" height="1" fill="#d0d0d0"/>
<path d="M863,391 Q860.5,391 860.5,394 Q860.5,397 863,397" fill="none" stroke="#555" stroke-width="1"/>
<rect x="860.5" y="405" width="2" height="5" fill="#8a2020"/>
<path d="M861,476 V485 M861,477 Q863,477 863,479 Q863,481 861,481" fill="none" stroke="#444" stroke-width="1"/>
<rect x="860" y="528" width="3" height="1" fill="#d8d8d8"/>
<rect x="860" y="598" width="3" height="29" fill="#7a5a7a"/>
<rect x="861" y="603" width="2" height="6" fill="#b090b0"/>
<!-- hem notches -->
<path d="M216,438 V446 M215,453.5 V461.5 M365.5,439.5 V447.5 M365.8,454.5 V462.5 M377.5,439.5 V447.5 M377.5,454.5 V462.5" stroke="#666" stroke-width="1"/>

</svg>
</body></html>
